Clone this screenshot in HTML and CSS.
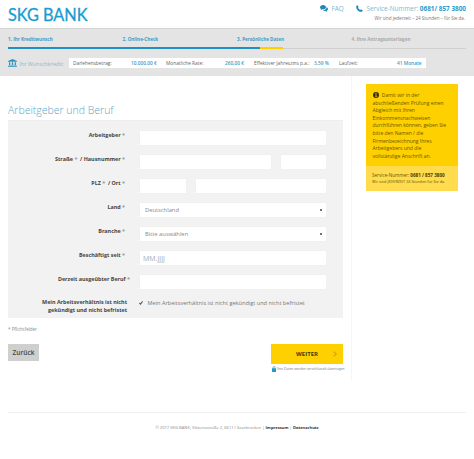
FILE: index.html
```html
<!DOCTYPE html>
<html lang="de">
<head>
    <meta charset="UTF-8">
    <meta name="viewport" content="width=device-width, initial-scale=1.0">
    <title>SKG Bank - Arbeitgeber und Beruf</title>
    <link rel="stylesheet" href="styles.css">
</head>
<body>

    <!-- Logo and service links -->
    <header class="top-bar">
        <div class="logo">SKG BANK</div>
        <div class="top-right">
            <div class="top-links">
                <span class="faq">
                    <svg class="icon" width="8" height="7" viewBox="0 0 16 14"><path d="M6 0C2.700 0 0 2 0 4.600c0 1.400.8 2.600 2 3.400-.2.800-.7 1.500-1.200 2 1.300-.1 2.500-.6 3.500-1.300.5.100 1.100.2 1.700.2 3.300 0 6-2.100 6-4.400C12 2 9.300 0 6 0z"/><path d="M13.200 4.500c.1 3-3 5.700-7 5.900 1 1.200 2.800 1.900 4.700 1.700.9.700 2.200 1.300 3.600 1.400-.5-.5-1-1.200-1.200-2 1.600-.8 2.700-2.100 2.700-3.500 0-1.500-1.100-2.800-2.800-3.500z"/></svg>
                    FAQ
                </span>
                <span class="service">
                    <svg class="icon" width="7" height="7" viewBox="0 0 14 14"><path d="M3.200.5 5.300 4 4 5.500c.8 1.800 2.400 3.500 4.400 4.500l1.500-1.400 3.600 2.200c-.4 1.500-1.600 2.700-3 2.700C5 13.500.5 8.600.5 3.400.5 2 1.800.8 3.200.5z"/></svg>
                    Service-Nummer: <b>0681/ 857 3800</b>
                </span>
            </div>
            <div class="top-note">Wir sind jederzeit – 24 Stunden – für Sie da.</div>
        </div>
    </header>

    <!-- Progress steps and loan summary -->
    <section class="progress-band">
        <div class="steps">
            <div class="step done">1. Ihr Kreditwunsch</div>
            <div class="step done">2. Online-Check</div>
            <div class="step current">3. Persönliche Daten</div>
            <div class="step">4. Ihre Antragsunterlagen</div>
        </div>
        <div class="wish-row">
            <div class="wish-title">
                <svg class="bank-icon" width="9" height="8" viewBox="0 0 18 16"><path d="M9 0 18 4v1.500H0V4z"/><path d="M2 6.500h2.500V12H2zM7.700 6.500h2.600V12H7.700zM13.500 6.500H16V12h-2.500zM1 13h16v1H1zM0 14.500h18V16H0z"/></svg>
                Ihr Wunschkredit:
            </div>
            <div class="wish-box">
                <span class="wish-label w1">Darlehensbetrag:</span><span class="wish-value v1">10.000,00 €</span>
                <span class="wish-label w2">Monatliche Rate:</span><span class="wish-value v2">260,00 €</span>
                <span class="wish-label w3">Effektiver Jahreszins p.a.:</span><span class="wish-value v3">3,59 %</span>
                <span class="wish-label w4">Laufzeit:</span><span class="wish-value v4">41 Monate</span>
            </div>
        </div>
    </section>

    <div class="content">
        <main class="main-col">
            <h1 class="form-title">Arbeitgeber und Beruf</h1>

            <form class="form-panel">
                <div class="form-row">
                    <label class="form-label">Arbeitgeber <i>*</i></label>
                    <div class="fields"><input class="field" type="text"></div>
                </div>
                <div class="form-row">
                    <label class="form-label">Straße <i>*</i> &nbsp;/ Hausnummer <i>*</i></label>
                    <div class="fields"><input class="field grow" type="text"><input class="field house" type="text"></div>
                </div>
                <div class="form-row">
                    <label class="form-label">PLZ <i>*</i> &nbsp;/ Ort <i>*</i></label>
                    <div class="fields"><input class="field plz" type="text"><input class="field grow" type="text"></div>
                </div>
                <div class="form-row">
                    <label class="form-label">Land <i>*</i></label>
                    <div class="fields"><div class="field select">Deutschland<span class="caret"></span></div></div>
                </div>
                <div class="form-row">
                    <label class="form-label">Branche <i>*</i></label>
                    <div class="fields"><div class="field select">Bitte auswählen<span class="caret"></span></div></div>
                </div>
                <div class="form-row">
                    <label class="form-label">Beschäftigt seit <i>*</i></label>
                    <div class="fields"><input class="field" type="text" placeholder="MM.JJJJ"></div>
                </div>
                <div class="form-row">
                    <label class="form-label label-wide">Derzeit ausgeübter Beruf <i>*</i></label>
                    <div class="fields"><input class="field" type="text"></div>
                </div>
                <div class="form-row check-row">
                    <label class="form-label">Mein Arbeitsverhältnis ist nicht gekündigt und nicht befristet</label>
                    <div class="check-text">
                        <svg width="4" height="4" viewBox="0 0 8 8"><path d="M0 4.500 1.500 3l1.500 1.500L6.500 0 8 1.500 3 8z"/></svg>
                        Mein Arbeitsverhältnis ist nicht gekündigt und nicht befristet
                    </div>
                </div>
            </form>

            <div class="required-note">* Pflichtfelder</div>

            <div class="actions">
                <button class="back-btn" type="button">Zurück</button>
                <div class="next-wrap">
                    <button class="next-btn" type="button">WEITER<span class="chevron"></span></button>
                    <div class="secure-note">
                        <svg width="4" height="6" viewBox="0 0 8 12"><path fill="none" stroke="#555" stroke-width="1" d="M2 5V3a2 2 0 0 1 4 0v2"/><rect y="4.500" width="8" height="7.500" fill="#1a9cd0"/></svg>
                        Ihre Daten werden verschlüsselt übertragen
                    </div>
                </div>
            </div>
        </main>

        <aside class="side-col">
            <div class="hint-box">
                <div class="hint-text">
                    <svg class="info-icon" width="6" height="6" viewBox="0 0 12 12"><circle cx="6" cy="6" r="6" fill="#3a3000"/><path fill="#ffd000" d="M5 2.200h2v1.800H5zM4.600 5h2.400v3.800h.8V10H4.400V8.800h.9V6.200h-.7z"/></svg>
                    Damit wir in der abschließenden Prüfung einen Abgleich mit Ihren Einkommensnachweisen durchführen können, geben Sie bitte den Namen / die Firmenbezeichnung Ihres Arbeitgebers und die vollständige Anschrift an.
                </div>
                <div class="hint-footer">
                    <div class="hint-phone">Service-Nummer: <b>0681 / 857 3800</b></div>
                    <div class="hint-hours">Wir sind JEDERZEIT 24 Stunden für Sie da.</div>
                </div>
            </div>
        </aside>
    </div>

    <footer class="page-footer">
        © 2017 SKG BANK, Viktoriastraße 2, 66111 Saarbrücken | <b>Impressum</b> | <b>Datenschutz</b>
    </footer>

</body>
</html>
```

FILE: styles.css
```css
/* General page styling */
html, body {
    height: 459px;
    overflow: hidden;
}

body {
    font-family: 'Open Sans', 'Liberation Sans', sans-serif;
    background-color: #ffffff;
    color: #555;
    margin: 0;
    padding: 0;
}

/* Header */
.top-bar {
    height: 28px;
    display: flex;
    justify-content: space-between;
    padding: 0 8px;
    box-sizing: border-box;
}

.logo {
    font-family: 'Lato', sans-serif;
    font-size: 16.300px;
    line-height: 17px;
    margin-top: 6px;
    font-weight: 400;
    -webkit-text-stroke: 0.3px #1a9cd0;
    color: #1a9cd0;
}

.top-right {
    text-align: right;
    padding-top: 4px;
}

.top-links {
    font-size: 6.400px;
    line-height: 9px;
    color: #7fb5cf;
    display: flex;
    justify-content: flex-end;
    gap: 12px;
}

.top-links b {
    color: #2b9bcb;
}

.icon {
    fill: #1f86b5;
    vertical-align: -1px;
    margin-right: 2px;
}

.top-note {
    font-size: 4.500px;
    line-height: 6px;
    margin-top: 2px;
    margin-right: 1px;
    color: #777;
}

/* Progress band */
.progress-band {
    height: 48px;
    box-sizing: border-box;
    background-color: #e4e4e4;
    border-top: 1px solid #d4d4d4;
    padding: 7px 8px 0;
}

.steps {
    display: grid;
    grid-template-columns: repeat(4, 114.500px);
    width: 458px;
    height: 13px;
    background: linear-gradient(#cfcfcf, #cfcfcf) left 12px / 100% 1px no-repeat;
}

.step {
    font-size: 4.600px;
    line-height: 6px;
    height: 13px;
    box-sizing: border-box;
    font-weight: 700;
    color: #aaa;
}

.step.done, .step.current {
    color: #3d9cc8;
}

.step.done {
    border-bottom: 2px solid #1f8fc4;
}

.step.current {
    background: linear-gradient(90deg, #1f8fc4 50%, #ffd000 50%) left 11px / 46px 2px no-repeat;
}

.wish-row {
    display: flex;
    align-items: center;
    margin-top: 9px;
}

.wish-title {
    width: 61px;
    font-size: 5.400px;
    color: #8fb9cf;
    white-space: nowrap;
}

.bank-icon {
    fill: #2b93c2;
    vertical-align: -1px;
    margin-right: 1px;
}

.wish-box {
    width: 357px;
    height: 10px;
    background-color: #fff;
    display: flex;
    align-items: center;
    font-size: 4.800px;
    white-space: nowrap;
    color: #666;
    box-sizing: border-box;
    padding-left: 4px;
}

.wish-value {
    color: #3d9cc8;
    font-weight: 600;
}

.w1 { width: 58px; }
.v1 { width: 35px; }
.w2 { width: 59px; }
.v2 { width: 29px; }
.w3 { width: 60px; }
.v3 { width: 25px; }
.w4 { width: 58px; }

/* Two column content */
.content {
    display: flex;
    padding-left: 8px;
}

.main-col {
    width: 335px;
}

.form-title {
    font-size: 10.500px;
    line-height: 14px;
    font-weight: 300;
    color: #5ba6c9;
    margin: 27px 0 0;
    padding-bottom: 3px;
    border-bottom: 1px solid #eeeeee;
}

.form-panel {
    background-color: #f2f2f2;
    padding-top: 9px;
    height: 197px;
    box-sizing: border-box;
}

.form-row {
    display: flex;
    margin-bottom: 8px;
    height: 16px;
}

.form-label {
    width: 122px;
    box-sizing: border-box;
    padding-right: 5px;
    text-align: right;
    font-size: 5.400px;
    line-height: 10px;
    font-weight: 700;
    color: #444;
    margin-right: 9px;
}

.form-label i {
    color: #999;
    font-style: normal;
}

.label-wide {
    padding-right: 0;
}

.fields {
    width: 188px;
    display: flex;
    gap: 8px;
}

.field {
    width: 100%;
    height: 16px;
    box-sizing: border-box;
    border: 1px solid #f0f0f0;
    border-radius: 1px;
    background-color: #fff;
    padding: 0 5px;
    font-family: inherit;
    font-size: 5.800px;
    color: #888;
    min-width: 0;
}

input.field {
    font-size: 7px;
    padding: 0 3px;
}

.field::placeholder {
    color: #aaa;
}

.grow {
    flex: 1;
}

.house {
    width: 47px;
    flex: none;
}

.plz {
    width: 48px;
    flex: none;
}

.select {
    display: flex;
    align-items: center;
    justify-content: space-between;
}

.caret {
    width: 2px;
    height: 2px;
    margin-right: -1px;
    background-color: #444;
    border-radius: 50%;
}

.check-row {
    height: auto;
}

.check-row .form-label {
    line-height: 8px;
    padding-left: 30px;
    padding-right: 3px;
}

.check-text {
    font-size: 5.600px;
    line-height: 8px;
    color: #777;
    white-space: nowrap;
    margin-top: 1px;
}

.check-text svg {
    fill: #555;
    margin-right: 3px;
}

.required-note {
    font-size: 4.500px;
    line-height: 6px;
    color: #888;
    margin-top: 8px;
}

/* Buttons */
.actions {
    display: flex;
    justify-content: space-between;
    align-items: flex-start;
    margin-top: 12px;
}

.back-btn {
    width: 31px;
    height: 17px;
    background-color: #cfcfcf;
    border: 0;
    padding: 0;
    font-family: inherit;
    font-size: 6.500px;
    font-weight: 600;
    color: #444;
}

.next-wrap {
    width: 72px;
}

.next-btn {
    position: relative;
    width: 72px;
    height: 20px;
    background-color: #ffd000;
    border: 0;
    padding: 0;
    font-family: inherit;
    font-size: 6px;
    font-weight: 700;
    color: #4a3d00;
    display: block;
}

.chevron {
    position: absolute;
    right: 7px;
    top: 8px;
    width: 3px;
    height: 3px;
    border-top: 1px solid #d99a1a;
    border-right: 1px solid #d99a1a;
    transform: rotate(45deg);
}

.secure-note {
    font-size: 3.300px;
    line-height: 6px;
    color: #777;
    white-space: nowrap;
    margin-top: 2px;
    display: flex;
    align-items: center;
    gap: 1px;
}

.secure-note svg {
    flex: none;
    margin-left: 1px;
}

/* Right column */
.side-col {
    width: 107px;
    height: 304px;
    margin-left: 8px;
    border-left: 1px solid #f5f5f5;
    padding-left: 14px;
    padding-top: 8px;
    box-sizing: border-box;
}

.hint-box {
    width: 92px;
    background-color: #ffd000;
    color: #6b5600;
}

.hint-text {
    font-size: 5px;
    line-height: 7.600px;
    padding: 8px 9px 6px 6.500px;
    height: 82px;
    box-sizing: border-box;
}

.info-icon {
    margin-right: 2px;
    vertical-align: -1px;
}

.hint-footer {
    background-color: #ffdb4d;
    height: 25px;
    padding: 6px 6px 0;
    box-sizing: border-box;
    white-space: nowrap;
}

.hint-phone {
    font-size: 4.600px;
    line-height: 7px;
}

.hint-phone b {
    color: #4a3d00;
}

.hint-hours {
    font-size: 3.800px;
    line-height: 6px;
}

/* Footer */
.page-footer {
    margin: 32px 8px 0;
    border-top: 1px solid #eeeeee;
    padding-top: 12px;
    text-align: center;
    font-size: 4.100px;
    line-height: 6px;
    color: #888;
}

.page-footer b {
    color: #333;
}
```
